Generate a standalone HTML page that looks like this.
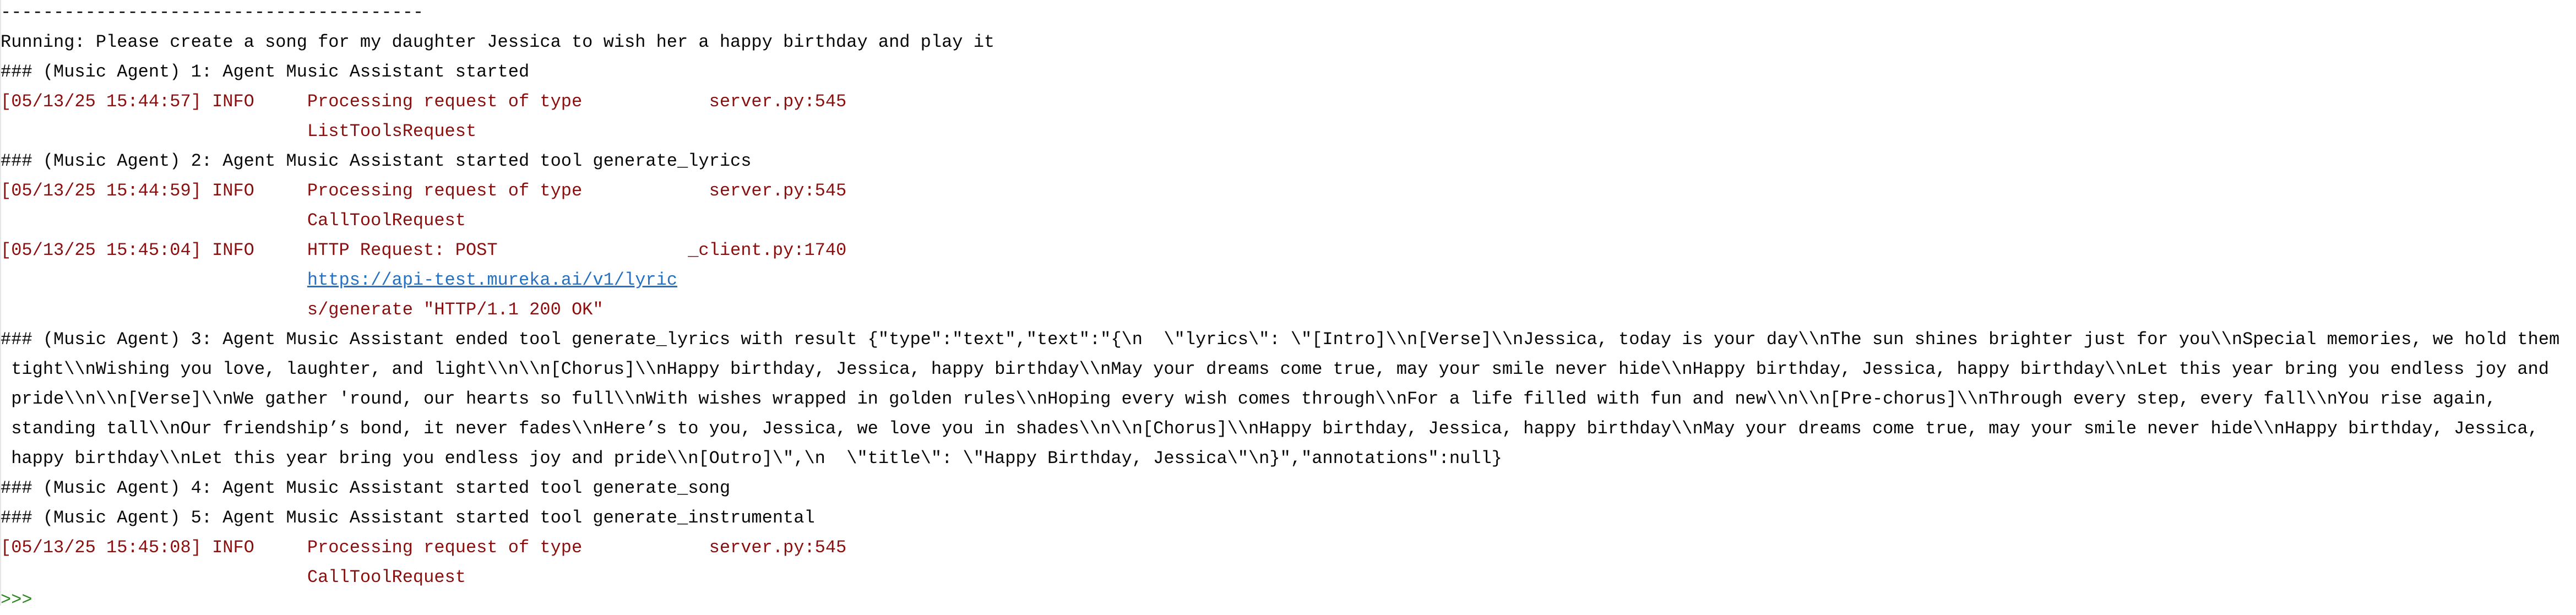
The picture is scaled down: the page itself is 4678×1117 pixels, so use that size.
<!DOCTYPE html>
<html><head><meta charset="utf-8">
<style>
html,body{margin:0;padding:0;background:#fff;width:4678px;height:1100px;overflow:hidden;}
#c{position:absolute;left:1px;top:-4px;font-family:"Liberation Mono","DejaVu Sans Mono",monospace;font-size:32px;line-height:54px;white-space:pre;color:#080808;}
.r{color:#8a0f0f;}
.a{color:#2470c2;text-decoration:underline;}
#p{position:absolute;left:1px;top:1063px;font-family:"Liberation Mono",monospace;font-size:32px;line-height:54px;color:#2a8a1e;white-space:pre;}
#b{position:absolute;left:0;top:0;width:2px;height:1100px;background:#e6e6e6;}
</style></head><body>
<div id="b"></div>
<div id="c">----------------------------------------
Running: Please create a song for my daughter Jessica to wish her a happy birthday and play it
### (Music Agent) 1: Agent Music Assistant started
<span class="r">[05/13/25 15:44:57] INFO     Processing request of type            server.py:545</span>
<span class="r">                             ListToolsRequest</span>
### (Music Agent) 2: Agent Music Assistant started tool generate_lyrics
<span class="r">[05/13/25 15:44:59] INFO     Processing request of type            server.py:545</span>
<span class="r">                             CallToolRequest</span>
<span class="r">[05/13/25 15:45:04] INFO     HTTP Request: POST                  _client.py:1740</span>
                             <span class="a">https://api-test.mureka.ai/v1/lyric</span>
<span class="r">                             s/generate "HTTP/1.1 200 OK"</span>
### (Music Agent) 3: Agent Music Assistant ended tool generate_lyrics with result {"type":"text","text":"{\n  \"lyrics\": \"[Intro]\\n[Verse]\\nJessica, today is your day\\nThe sun shines brighter just for you\\nSpecial memories, we hold them
 tight\\nWishing you love, laughter, and light\\n\\n[Chorus]\\nHappy birthday, Jessica, happy birthday\\nMay your dreams come true, may your smile never hide\\nHappy birthday, Jessica, happy birthday\\nLet this year bring you endless joy and
 pride\\n\\n[Verse]\\nWe gather 'round, our hearts so full\\nWith wishes wrapped in golden rules\\nHoping every wish comes through\\nFor a life filled with fun and new\\n\\n[Pre-chorus]\\nThrough every step, every fall\\nYou rise again,
 standing tall\\nOur friendship’s bond, it never fades\\nHere’s to you, Jessica, we love you in shades\\n\\n[Chorus]\\nHappy birthday, Jessica, happy birthday\\nMay your dreams come true, may your smile never hide\\nHappy birthday, Jessica,
 happy birthday\\nLet this year bring you endless joy and pride\\n[Outro]\",\n  \"title\": \"Happy Birthday, Jessica\"\n}","annotations":null}
### (Music Agent) 4: Agent Music Assistant started tool generate_song
### (Music Agent) 5: Agent Music Assistant started tool generate_instrumental
<span class="r">[05/13/25 15:45:08] INFO     Processing request of type            server.py:545</span>
<span class="r">                             CallToolRequest</span></div>
<div id="p">&gt;&gt;&gt;</div>
</body></html>
